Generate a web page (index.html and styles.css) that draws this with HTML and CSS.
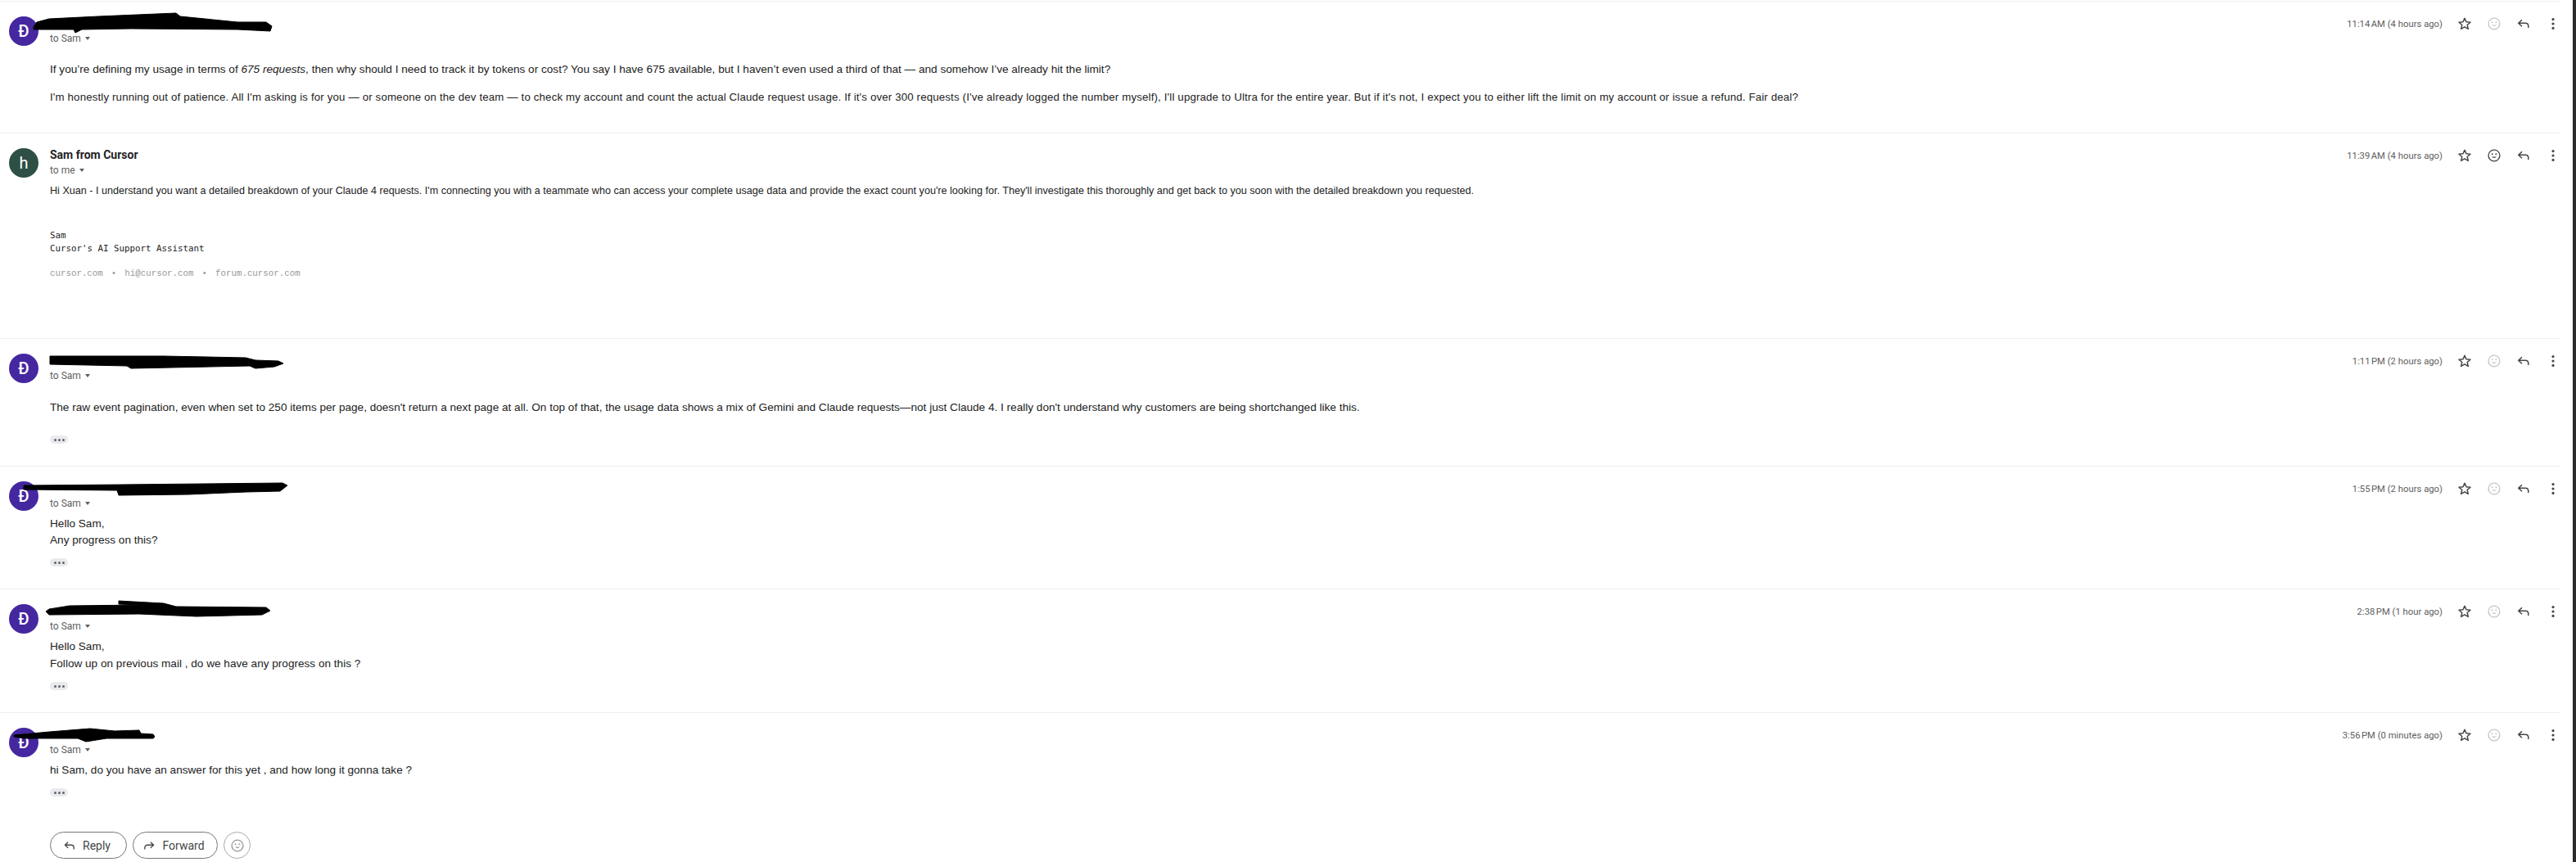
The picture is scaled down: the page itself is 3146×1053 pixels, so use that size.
FILE: index.html
```html
<!DOCTYPE html>
<html lang="en">
<head>
    <meta charset="UTF-8">
    <meta name="viewport" content="width=device-width, initial-scale=1.0">
    <title>Conversation</title>
    <link rel="stylesheet" href="styles.css">
</head>
<body>
    <svg class="icon-defs" width="0" height="0">
        <symbol id="star" viewBox="0 0 20 20">
            <path d="M10 3.2l2 4.6 5 .45-3.8 3.3 1.15 4.9L10 13.85 5.65 16.45l1.15-4.9L3 8.25l5-.45z" fill="none" stroke="currentColor" stroke-width="1.5" stroke-linejoin="round"/>
        </symbol>
        <symbol id="smile" viewBox="0 0 20 20">
            <circle cx="10" cy="10" r="6.9" fill="none" stroke="currentColor" stroke-width="1.4"/>
            <circle cx="7.6" cy="8.2" r="1" fill="currentColor"/>
            <circle cx="12.4" cy="8.2" r="1" fill="currentColor"/>
            <path d="M6.9 11.6c1.6 1.7 4.6 1.7 6.2 0z" fill="currentColor"/>
        </symbol>
        <symbol id="reply" viewBox="0 0 20 20">
            <path d="M8 5.2L3.8 9.2 8 13.2M4.2 9.2h8c2.1 0 3.6 1.5 3.6 3.6V15" fill="none" stroke="currentColor" stroke-width="1.5"/>
        </symbol>
        <symbol id="forward" viewBox="0 0 20 20">
            <path d="M12 5.2l4.2 4-4.2 4M15.8 9.2h-8c-2.1 0-3.6 1.5-3.6 3.6V15" fill="none" stroke="currentColor" stroke-width="1.5"/>
        </symbol>
        <symbol id="more" viewBox="0 0 20 20">
            <circle cx="10" cy="4.6" r="1.6" fill="currentColor"/>
            <circle cx="10" cy="10" r="1.6" fill="currentColor"/>
            <circle cx="10" cy="15.4" r="1.6" fill="currentColor"/>
        </symbol>
    </svg>

    <div class="thread">
        <div class="message pad-first">
            <div class="avatar purple">Đ</div>
            <div class="message-main">
                <div class="message-head">
                    <div>
                        <div class="sender"></div>
                        <div class="recipient">to Sam <span class="caret"></span></div>
                    </div>
                    <div class="meta">
                        <span class="time">11:14&#8239;AM (4 hours ago)</span>
                        <span class="action"><svg><use href="#star"/></svg></span>
                        <span class="action faded"><svg><use href="#smile"/></svg></span>
                        <span class="action"><svg><use href="#reply"/></svg></span>
                        <span class="action"><svg><use href="#more"/></svg></span>
                    </div>
                </div>
                <div class="message-body spaced">
                    <p>If you’re defining my usage in terms of <em>675 requests</em>, then why should I need to track it by tokens or cost? You say I have 675 available, but I haven’t even used a third of that — and somehow I’ve already hit the limit?</p>
                    <p class="snug">I'm honestly running out of patience. All I'm asking is for you — or someone on the dev team — to check my account and count the actual Claude request usage. If it's over 300 requests (I've already logged the number myself), I'll upgrade to Ultra for the entire year. But if it's not, I expect you to either lift the limit on my account or issue a refund. Fair deal?</p>
                </div>
            </div>
            <svg class="scribble" viewBox="0 0 360 40"><polygon points="41,31 45,25 60,21 120,18 215,14 220,18 290,25 325,25 332,30 330,36 290,34 160,33 100,34 92,38 90,34 41,34"/></svg>
        </div>

        <div class="message pad-second">
            <div class="avatar green">h</div>
            <div class="message-main">
                <div class="message-head">
                    <div>
                        <div class="sender">Sam from Cursor</div>
                        <div class="recipient">to me <span class="caret"></span></div>
                    </div>
                    <div class="meta">
                        <span class="time">11:39&#8239;AM (4 hours ago)</span>
                        <span class="action"><svg><use href="#star"/></svg></span>
                        <span class="action"><svg><use href="#smile"/></svg></span>
                        <span class="action"><svg><use href="#reply"/></svg></span>
                        <span class="action"><svg><use href="#more"/></svg></span>
                    </div>
                </div>
                <div class="message-body">
                    <p class="tight">Hi Xuan - I understand you want a detailed breakdown of your Claude 4 requests. I'm connecting you with a teammate who can access your complete usage data and provide the exact count you're looking for. They'll investigate this thoroughly and get back to you soon with the detailed breakdown you requested.</p>
                </div>
                <div class="signature">
                    <div>Sam</div>
                    <div>Cursor's AI Support Assistant</div>
                </div>
                <div class="signature-links">cursor.com<span class="dot">•</span>hi@cursor.com<span class="dot">•</span>forum.cursor.com</div>
            </div>
        </div>

        <div class="message">
            <div class="avatar purple">Đ</div>
            <div class="message-main">
                <div class="message-head">
                    <div>
                        <div class="sender"></div>
                        <div class="recipient">to Sam <span class="caret"></span></div>
                    </div>
                    <div class="meta">
                        <span class="time">1:11&#8239;PM (2 hours ago)</span>
                        <span class="action"><svg><use href="#star"/></svg></span>
                        <span class="action faded"><svg><use href="#smile"/></svg></span>
                        <span class="action"><svg><use href="#reply"/></svg></span>
                        <span class="action"><svg><use href="#more"/></svg></span>
                    </div>
                </div>
                <div class="message-body spaced-more">
                    <p>The raw event pagination, even when set to 250 items per page, doesn't return a next page at all. On top of that, the usage data shows a mix of Gemini and Claude requests—not just Claude 4. I really don't understand why customers are being shortchanged like this.</p>
                </div>
                <div class="trimmed far"><i></i><i></i><i></i></div>
            </div>
            <svg class="scribble" viewBox="0 0 360 40"><polygon points="61,21 200,21 300,23 312,26 340,27 346,30 335,34 312,36 305,33 160,36 155,33 61,31"/></svg>
        </div>

        <div class="message">
            <div class="avatar purple">Đ</div>
            <div class="message-main">
                <div class="message-head">
                    <div>
                        <div class="sender"></div>
                        <div class="recipient">to Sam <span class="caret"></span></div>
                    </div>
                    <div class="meta">
                        <span class="time">1:55&#8239;PM (2 hours ago)</span>
                        <span class="action"><svg><use href="#star"/></svg></span>
                        <span class="action faded"><svg><use href="#smile"/></svg></span>
                        <span class="action"><svg><use href="#reply"/></svg></span>
                        <span class="action"><svg><use href="#more"/></svg></span>
                    </div>
                </div>
                <div class="message-body">
                    <div>Hello Sam,</div>
                    <div>Any progress on this?</div>
                </div>
                <div class="trimmed"><i></i><i></i><i></i></div>
            </div>
            <svg class="scribble" viewBox="0 0 360 40"><polygon points="29,23 150,22 345,20 351,23 342,30 300,31 230,34 145,35 143,29 29,28"/></svg>
        </div>

        <div class="message">
            <div class="avatar purple">Đ</div>
            <div class="message-main">
                <div class="message-head">
                    <div>
                        <div class="sender"></div>
                        <div class="recipient">to Sam <span class="caret"></span></div>
                    </div>
                    <div class="meta">
                        <span class="time">2:38&#8239;PM (1 hour ago)</span>
                        <span class="action"><svg><use href="#star"/></svg></span>
                        <span class="action faded"><svg><use href="#smile"/></svg></span>
                        <span class="action"><svg><use href="#reply"/></svg></span>
                        <span class="action"><svg><use href="#more"/></svg></span>
                    </div>
                </div>
                <div class="message-body">
                    <div>Hello Sam,</div>
                    <div class="next-line">Follow up on previous mail , do we have any progress on this ?</div>
                </div>
                <div class="trimmed"><i></i><i></i><i></i></div>
            </div>
            <svg class="scribble" viewBox="0 0 360 40"><polygon points="145,14 200,17 215,21 325,22 330,26 320,31 240,33 170,30 60,31 56,27 60,24 85,20 170,19 145,18"/></svg>
        </div>

        <div class="message last">
            <div class="avatar purple">Đ</div>
            <div class="message-main">
                <div class="message-head">
                    <div>
                        <div class="sender"></div>
                        <div class="recipient">to Sam <span class="caret"></span></div>
                    </div>
                    <div class="meta">
                        <span class="time">3:56&#8239;PM (0 minutes ago)</span>
                        <span class="action"><svg><use href="#star"/></svg></span>
                        <span class="action faded"><svg><use href="#smile"/></svg></span>
                        <span class="action"><svg><use href="#reply"/></svg></span>
                        <span class="action"><svg><use href="#more"/></svg></span>
                    </div>
                </div>
                <div class="message-body">
                    <div>hi Sam, do you have an answer for this yet , and how long it gonna take ?</div>
                </div>
                <div class="trimmed"><i></i><i></i><i></i></div>
                <div class="reply-bar">
                    <button class="pill-button reply-button"><svg><use href="#reply"/></svg>Reply</button>
                    <button class="pill-button forward-button"><svg><use href="#forward"/></svg>Forward</button>
                    <button class="round-button"><svg><use href="#smile"/></svg></button>
                </div>
            </div>
            <svg class="scribble" viewBox="0 0 360 40"><polygon points="17,27 60,23 110,19 140,22 170,21 172,25 187,26 189,29 187,31 130,31 105,35 95,31 30,31 17,29"/></svg>
        </div>
    </div>

    <div class="window-edge"></div>
</body>
</html>
```

FILE: styles.css
```css
* {
    margin: 0;
    padding: 0;
    box-sizing: border-box;
}

html, body {
    height: 100%;
    overflow: hidden;
}

body {
    display: flex;
    background-color: #fff;
    font-family: 'Liberation Sans', Arial, sans-serif;
    font-size: 13.6px;
    color: #222;
}

.icon-defs {
    position: absolute;
}

.thread {
    flex: 1;
    margin-right: 15px;
    padding-top: 1px;
}

.window-edge {
    width: 4px;
    background-color: #2b2b2b;
}

.message {
    position: relative;
    display: flex;
    gap: 14px;
    padding: 16px 0 27px 11px;
    border-top: 1px solid #eceff1;
}

.message.pad-first {
    padding-bottom: 33px;
}

.message.pad-second {
    padding-bottom: 71px;
}

.message.last {
    padding-bottom: 0;
}

.avatar {
    flex: none;
    width: 36px;
    height: 36px;
    margin-top: 2px;
    border-radius: 50%;
    display: flex;
    align-items: center;
    justify-content: center;
    color: #fff;
    font-family: Roboto, sans-serif;
    font-size: 20px;
    font-weight: 500;
}

.avatar.purple {
    background-color: #4527a0;
}

.avatar.green {
    background-color: #2d4f45;
    font-weight: 400;
}

.message-main {
    flex: 1;
    min-width: 0;
}

.message-head {
    display: flex;
    justify-content: space-between;
}

.sender {
    height: 20px;
    line-height: 20px;
    font-family: Roboto, sans-serif;
    font-size: 14px;
    font-weight: 700;
    color: #1f1f1f;
}

.recipient {
    height: 18px;
    line-height: 18px;
    font-family: Roboto, sans-serif;
    font-size: 12px;
    color: #5e5e5e;
}

.caret {
    display: inline-block;
    margin: 0 0 2px 2px;
    border-left: 3px solid transparent;
    border-right: 3px solid transparent;
    border-top: 4px solid #5e5e5e;
}

.meta {
    display: flex;
    align-items: center;
    height: 20px;
    margin: 1px -9px 0 0;
    color: #5e5e5e;
}

.time {
    margin-right: 9px;
    font-family: Roboto, sans-serif;
    font-size: 11.3px;
}

.action {
    width: 36px;
    height: 20px;
    display: flex;
    justify-content: center;
    color: #444746;
}

.action svg {
    width: 20px;
    height: 20px;
}

.action.faded {
    color: #c4c7c5;
}

.message-body {
    margin-top: 6px;
    line-height: 20px;
}

.message-body.spaced {
    padding-top: 13px;
}

.message-body.spaced-more {
    padding-top: 14px;
}

.message-body p + p {
    margin-top: 14px;
}

.message-body .next-line {
    margin-top: 1px;
}

/* these two lines run narrower than the rest of the thread */
.message-body .snug {
    font-size: 13.26px;
    letter-spacing: 0.16px;
}

.message-body .tight {
    font-size: 12.6px;
}

.signature {
    margin-top: 37px;
    font-family: 'DejaVu Sans Mono', monospace;
    font-size: 10.8px;
    line-height: 16px;
    color: #222;
}

.signature-links {
    margin-top: 14px;
    font-family: 'Liberation Mono', monospace;
    font-size: 10.8px;
    line-height: 16px;
    color: #999;
}

.dot {
    margin: 0 10px;
}

.trimmed {
    width: 22px;
    height: 10px;
    margin-top: 12px;
    border-radius: 5px;
    background-color: #e8eaed;
    display: flex;
    align-items: center;
    justify-content: center;
    gap: 2px;
}

.trimmed.far {
    margin-top: 24px;
}

.trimmed i {
    width: 3px;
    height: 3px;
    border-radius: 50%;
    background-color: #5f6368;
}

.reply-bar {
    display: flex;
    gap: 7px;
    margin-top: 43px;
}

.pill-button {
    height: 33px;
    padding: 0 5px 0 0;
    display: flex;
    align-items: center;
    justify-content: center;
    gap: 7px;
    border: 1px solid #747775;
    border-radius: 17px;
    background-color: #fff;
    font-family: Roboto, sans-serif;
    font-size: 14px;
    color: #444746;
}

.reply-button {
    width: 94px;
}

.forward-button {
    width: 104px;
}

.pill-button svg {
    width: 18px;
    height: 18px;
}

.round-button {
    width: 33px;
    height: 33px;
    display: flex;
    align-items: center;
    justify-content: center;
    border: 1px solid #a8a8a8;
    border-radius: 50%;
    background-color: #fff;
    color: #9a9a9a;
}

.round-button svg {
    width: 20px;
    height: 20px;
}

/* marker strokes over the sender names, drawn in page pixels */
.scribble {
    position: absolute;
    left: 0;
    top: 0;
    width: 360px;
    height: 40px;
    pointer-events: none;
}

.scribble polygon {
    fill: #000;
    stroke: #000;
    stroke-width: 1;
    stroke-linejoin: round;
}
```
